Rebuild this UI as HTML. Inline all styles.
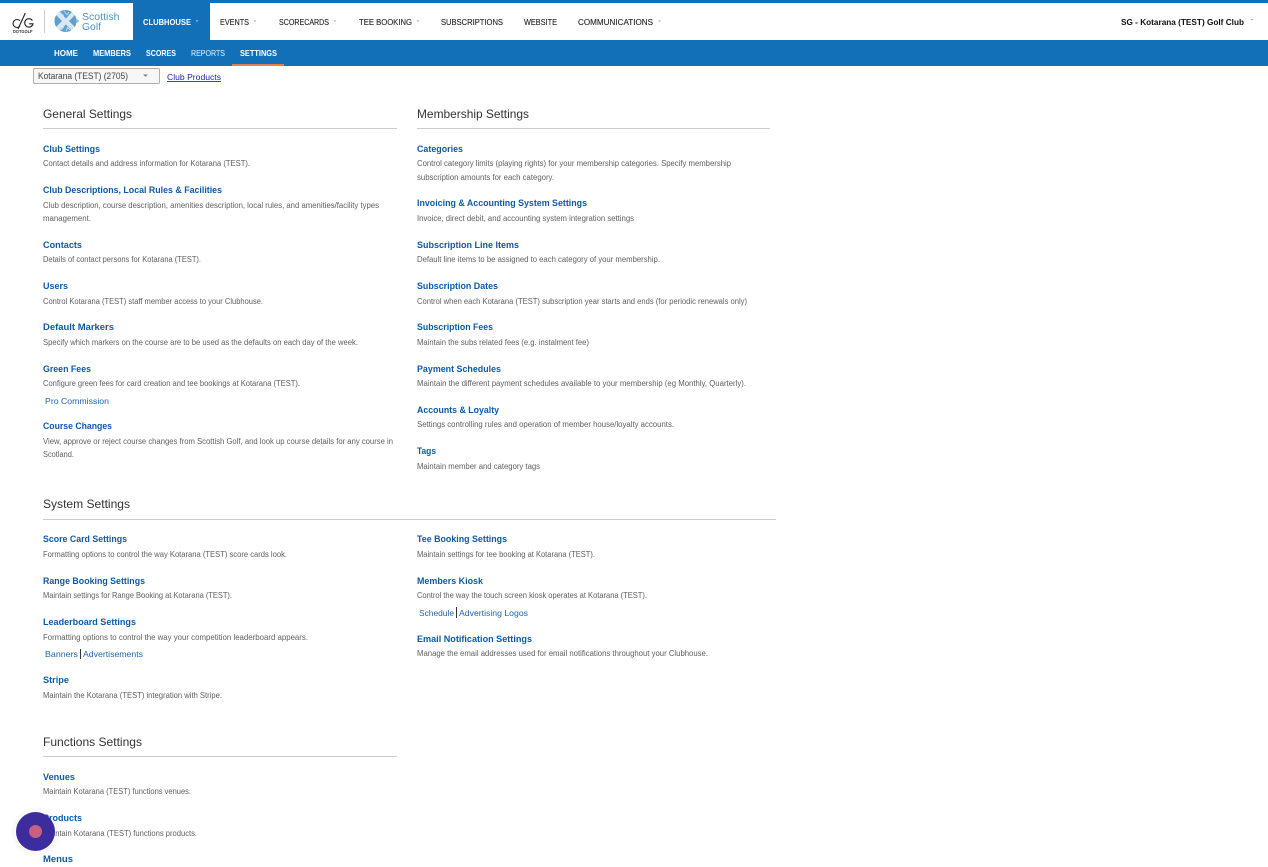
<!DOCTYPE html>
<html lang="en">
<head>
<meta charset="utf-8">
<title>Settings</title>
<style>
html,body{margin:0;padding:0;background:#fff;overflow:hidden;width:1268px;height:867px}
svg{display:block;position:absolute;left:0;top:0;filter:blur(.2px)}
text{font-family:"Liberation Sans",Arial,sans-serif;white-space:pre}
.n{font-size:8.5px;fill:#222;stroke:#222;stroke-width:.12px}
.s{font-size:8.5px;fill:#fff;font-weight:700}
.h{font-size:12px;fill:#333}
.t{font-size:9px;font-weight:700;fill:#0e5aa8}
.d{font-size:8px;fill:#5f5f5f}
.l{font-size:8.5px;fill:#1f65ad}
</style>
</head>
<body>
<svg width="1268" height="867" viewBox="0 0 1268 867" xmlns="http://www.w3.org/2000/svg">
<defs><clipPath id="g"><circle cx="65.500" cy="21" r="11"/></clipPath></defs>
<rect x="0" y="0" width="1268" height="3" fill="#1170b8"/>
<rect x="0" y="40" width="1268" height="26" fill="#1170b8"/>
<rect x="133" y="3" width="77" height="37" fill="#1170b8"/>
<rect x="232" y="64" width="52" height="2" fill="#e0834a"/>

<!-- logo -->
<g fill="none" stroke="#222" stroke-width="1.100">
<path d="M20 20.800a4 4 0 1 0 0 5.400"/>
<path d="M18 29L25.300 13"/>
<path d="M32.400 20.600a4.200 4.200 0 1 0 .6 3.200h-3.800"/>
</g>
<text x="13" y="32.800" style="font-size:4.500px;font-weight:700;fill:#333" textLength="19.500" lengthAdjust="spacingAndGlyphs">DOTGOLF</text>
<rect x="44" y="10" width="1" height="23" fill="#ccc"/>
<circle cx="65.500" cy="21" r="11" fill="#d7e7f3"/>
<g clip-path="url(#g)">
<path d="M57 9.500h17L66 18.500zM57 33h17L66 24.500zM54 13v16l8-8zM77 13v16l-8-8z" fill="#5f9fcd"/>
<path d="M60 12l4 4M64 11l3 4M69 12l-2 3M61 30l3-3M66 31l2-4M70 30l-3-3" stroke="#b9d6ea" stroke-width="1" fill="none"/>
</g>
<path d="M76 18.500l3.500 2.500-3.500 2.500z" fill="#8dbbdc"/>
<text x="82" y="20" style="font-size:10px;fill:#4a94c8" textLength="37.500" lengthAdjust="spacingAndGlyphs">Scottish</text>
<text x="82" y="30" style="font-size:10px;fill:#4a94c8" textLength="19" lengthAdjust="spacingAndGlyphs">Golf</text>

<!-- main nav -->
<text class="s" x="143" y="25" textLength="48" lengthAdjust="spacingAndGlyphs">CLUBHOUSE</text>
<text class="n" x="220" y="25" textLength="29" lengthAdjust="spacingAndGlyphs">EVENTS</text>
<text class="n" x="279" y="25" textLength="50" lengthAdjust="spacingAndGlyphs">SCORECARDS</text>
<text class="n" x="359" y="25" textLength="53" lengthAdjust="spacingAndGlyphs">TEE BOOKING</text>
<text class="n" x="441" y="25" textLength="62" lengthAdjust="spacingAndGlyphs">SUBSCRIPTIONS</text>
<text class="n" x="524" y="25" textLength="33" lengthAdjust="spacingAndGlyphs">WEBSITE</text>
<text class="n" x="578" y="25" textLength="75" lengthAdjust="spacingAndGlyphs">COMMUNICATIONS</text>
<path d="M195.500 20.500h3l-1.500 1.200z" fill="#cfe3f2"/>
<path d="M253.500 20.500h3l-1.500 1.200z" fill="#999"/>
<path d="M333.500 20.500h3l-1.500 1.200z" fill="#999"/>
<path d="M416.500 20.500h3l-1.500 1.200z" fill="#999"/>
<path d="M658 20.500h3l-1.500 1.200z" fill="#999"/>
<text x="1121" y="25" style="font-size:8.500px;font-weight:700;fill:#111" textLength="123" lengthAdjust="spacingAndGlyphs">SG - Kotarana (TEST) Golf Club</text>
<path d="M1250 19h3.500l-1.750 1.200z" fill="#999"/>

<!-- sub nav -->
<text class="s" x="54" y="56" textLength="24" lengthAdjust="spacingAndGlyphs">HOME</text>
<text class="s" x="93" y="56" textLength="38" lengthAdjust="spacingAndGlyphs">MEMBERS</text>
<text class="s" x="146" y="56" textLength="30" lengthAdjust="spacingAndGlyphs">SCORES</text>
<text x="191" y="56" style="font-size:8.500px;fill:#cde3f3;stroke:#cde3f3;stroke-width:.12px" textLength="34" lengthAdjust="spacingAndGlyphs">REPORTS</text>
<text class="s" x="240" y="56" textLength="37" lengthAdjust="spacingAndGlyphs">SETTINGS</text>

<!-- selector -->
<rect x="33.500" y="68.500" width="126" height="15" rx="1" fill="#f7f7f7" stroke="#b0b0b0"/>
<text x="38" y="79" style="font-size:9px;fill:#444" textLength="90" lengthAdjust="spacingAndGlyphs">Kotarana (TEST) (2705)</text>
<path d="M143 74.500h5l-2.500 2.200z" fill="#777"/>
<text x="167" y="80" style="font-size:8.500px;fill:#1a22a8;text-decoration:underline" textLength="54" lengthAdjust="spacingAndGlyphs">Club Products</text>

<!-- General Settings -->
<text class="h" x="43" y="118" textLength="89" lengthAdjust="spacingAndGlyphs">General Settings</text>
<rect x="43" y="128" width="354" height="1" fill="#ccc"/>
<text class="t" x="43" y="152" textLength="57" lengthAdjust="spacingAndGlyphs">Club Settings</text>
<text class="d" x="43" y="166" textLength="207" lengthAdjust="spacingAndGlyphs">Contact details and address information for Kotarana (TEST).</text>
<text class="t" x="43" y="193" textLength="179" lengthAdjust="spacingAndGlyphs">Club Descriptions, Local Rules &amp; Facilities</text>
<text class="d" x="43" y="208" textLength="336" lengthAdjust="spacingAndGlyphs">Club description, course description, amenities description, local rules, and amenities/facility types</text>
<text class="d" x="43" y="221" textLength="48" lengthAdjust="spacingAndGlyphs">management.</text>
<text class="t" x="43" y="248" textLength="39" lengthAdjust="spacingAndGlyphs">Contacts</text>
<text class="d" x="43" y="262" textLength="158" lengthAdjust="spacingAndGlyphs">Details of contact persons for Kotarana (TEST).</text>
<text class="t" x="43" y="289" textLength="25" lengthAdjust="spacingAndGlyphs">Users</text>
<text class="d" x="43" y="304" textLength="220" lengthAdjust="spacingAndGlyphs">Control Kotarana (TEST) staff member access to your Clubhouse.</text>
<text class="t" x="43" y="330" textLength="71" lengthAdjust="spacingAndGlyphs">Default Markers</text>
<text class="d" x="43" y="345" textLength="315" lengthAdjust="spacingAndGlyphs">Specify which markers on the course are to be used as the defaults on each day of the week.</text>
<text class="t" x="43" y="372" textLength="48" lengthAdjust="spacingAndGlyphs">Green Fees</text>
<text class="d" x="43" y="386" textLength="257" lengthAdjust="spacingAndGlyphs">Configure green fees for card creation and tee bookings at Kotarana (TEST).</text>
<text class="l" x="45" y="404" textLength="64" lengthAdjust="spacingAndGlyphs">Pro Commission</text>
<text class="t" x="43" y="429" textLength="69" lengthAdjust="spacingAndGlyphs">Course Changes</text>
<text class="d" x="43" y="444" textLength="350" lengthAdjust="spacingAndGlyphs">View, approve or reject course changes from Scottish Golf, and look up course details for any course in</text>
<text class="d" x="43" y="457" textLength="31" lengthAdjust="spacingAndGlyphs">Scotland.</text>

<!-- Membership Settings -->
<text class="h" x="417" y="118" textLength="112" lengthAdjust="spacingAndGlyphs">Membership Settings</text>
<rect x="417" y="128" width="353" height="1" fill="#ccc"/>
<text class="t" x="417" y="152" textLength="46" lengthAdjust="spacingAndGlyphs">Categories</text>
<text class="d" x="417" y="166" textLength="314" lengthAdjust="spacingAndGlyphs">Control category limits (playing rights) for your membership categories. Specify membership</text>
<text class="d" x="417" y="180" textLength="137" lengthAdjust="spacingAndGlyphs">subscription amounts for each category.</text>
<text class="t" x="417" y="206" textLength="170" lengthAdjust="spacingAndGlyphs">Invoicing &amp; Accounting System Settings</text>
<text class="d" x="417" y="221" textLength="217" lengthAdjust="spacingAndGlyphs">Invoice, direct debit, and accounting system integration settings</text>
<text class="t" x="417" y="248" textLength="102" lengthAdjust="spacingAndGlyphs">Subscription Line Items</text>
<text class="d" x="417" y="262" textLength="243" lengthAdjust="spacingAndGlyphs">Default line items to be assigned to each category of your membership.</text>
<text class="t" x="417" y="289" textLength="81" lengthAdjust="spacingAndGlyphs">Subscription Dates</text>
<text class="d" x="417" y="304" textLength="330" lengthAdjust="spacingAndGlyphs">Control when each Kotarana (TEST) subscription year starts and ends (for periodic renewals only)</text>
<text class="t" x="417" y="330" textLength="76" lengthAdjust="spacingAndGlyphs">Subscription Fees</text>
<text class="d" x="417" y="345" textLength="172" lengthAdjust="spacingAndGlyphs">Maintain the subs related fees (e.g. instalment fee)</text>
<text class="t" x="417" y="372" textLength="84" lengthAdjust="spacingAndGlyphs">Payment Schedules</text>
<text class="d" x="417" y="386" textLength="329" lengthAdjust="spacingAndGlyphs">Maintain the different payment schedules available to your membership (eg Monthly, Quarterly).</text>
<text class="t" x="417" y="413" textLength="82" lengthAdjust="spacingAndGlyphs">Accounts &amp; Loyalty</text>
<text class="d" x="417" y="427" textLength="257" lengthAdjust="spacingAndGlyphs">Settings controlling rules and operation of member house/loyalty accounts.</text>
<text class="t" x="417" y="454" textLength="19" lengthAdjust="spacingAndGlyphs">Tags</text>
<text class="d" x="417" y="469" textLength="123" lengthAdjust="spacingAndGlyphs">Maintain member and category tags</text>

<!-- System Settings -->
<text class="h" x="43" y="508" textLength="87" lengthAdjust="spacingAndGlyphs">System Settings</text>
<rect x="43" y="519" width="733" height="1" fill="#ccc"/>
<text class="t" x="43" y="542" textLength="84" lengthAdjust="spacingAndGlyphs">Score Card Settings</text>
<text class="d" x="43" y="557" textLength="244" lengthAdjust="spacingAndGlyphs">Formatting options to control the way Kotarana (TEST) score cards look.</text>
<text class="t" x="43" y="584" textLength="102" lengthAdjust="spacingAndGlyphs">Range Booking Settings</text>
<text class="d" x="43" y="598" textLength="189" lengthAdjust="spacingAndGlyphs">Maintain settings for Range Booking at Kotarana (TEST).</text>
<text class="t" x="43" y="625" textLength="93" lengthAdjust="spacingAndGlyphs">Leaderboard Settings</text>
<text class="d" x="43" y="640" textLength="265" lengthAdjust="spacingAndGlyphs">Formatting options to control the way your competition leaderboard appears.</text>
<text class="l" x="45" y="657" textLength="33" lengthAdjust="spacingAndGlyphs">Banners</text>
<rect x="80" y="649" width="1" height="10" fill="#333"/>
<text class="l" x="83" y="657" textLength="60" lengthAdjust="spacingAndGlyphs">Advertisements</text>
<text class="t" x="43" y="683" textLength="26" lengthAdjust="spacingAndGlyphs">Stripe</text>
<text class="d" x="43" y="698" textLength="179" lengthAdjust="spacingAndGlyphs">Maintain the Kotarana (TEST) integration with Stripe.</text>

<text class="t" x="417" y="542" textLength="90" lengthAdjust="spacingAndGlyphs">Tee Booking Settings</text>
<text class="d" x="417" y="557" textLength="178" lengthAdjust="spacingAndGlyphs">Maintain settings for tee booking at Kotarana (TEST).</text>
<text class="t" x="417" y="584" textLength="66" lengthAdjust="spacingAndGlyphs">Members Kiosk</text>
<text class="d" x="417" y="598" textLength="230" lengthAdjust="spacingAndGlyphs">Control the way the touch screen kiosk operates at Kotarana (TEST).</text>
<text class="l" x="419" y="616" textLength="35" lengthAdjust="spacingAndGlyphs">Schedule</text>
<rect x="456" y="607" width="1" height="11" fill="#333"/>
<text class="l" x="459" y="616" textLength="69" lengthAdjust="spacingAndGlyphs">Advertising Logos</text>
<text class="t" x="417" y="642" textLength="115" lengthAdjust="spacingAndGlyphs">Email Notification Settings</text>
<text class="d" x="417" y="656" textLength="291" lengthAdjust="spacingAndGlyphs">Manage the email addresses used for email notifications throughout your Clubhouse.</text>

<!-- Functions Settings -->
<text class="h" x="43" y="746" textLength="99" lengthAdjust="spacingAndGlyphs">Functions Settings</text>
<rect x="43" y="756" width="354" height="1" fill="#ccc"/>
<text class="t" x="43" y="780" textLength="32" lengthAdjust="spacingAndGlyphs">Venues</text>
<text class="d" x="43" y="794" textLength="148" lengthAdjust="spacingAndGlyphs">Maintain Kotarana (TEST) functions venues.</text>
<text class="t" x="43" y="821" textLength="39" lengthAdjust="spacingAndGlyphs">Products</text>
<text class="d" x="43" y="836" textLength="154" lengthAdjust="spacingAndGlyphs">Maintain Kotarana (TEST) functions products.</text>
<text class="t" x="43" y="862" textLength="30" lengthAdjust="spacingAndGlyphs">Menus</text>

<!-- floating button -->
<circle cx="35.500" cy="831.500" r="24" fill="#000" opacity="0.025"/>
<circle cx="35.500" cy="831.500" r="19.500" fill="#3d2c9e"/>
<circle cx="35.500" cy="831.500" r="6.500" fill="#c8607f"/>
</svg>
</body>
</html>
